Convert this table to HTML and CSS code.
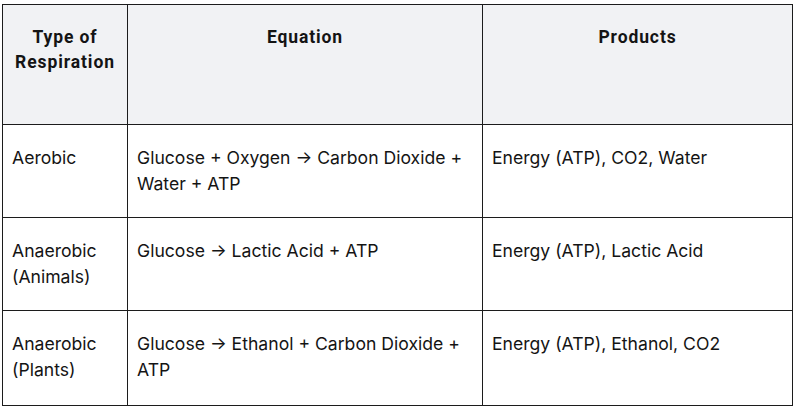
FILE: index.html
```html
<!DOCTYPE html>
<html lang="en">
<head>
<meta charset="utf-8">
<title>Types of Respiration</title>
<link rel="stylesheet" href="styles.css">
</head>
<body>
<table class="resp-table">
  <colgroup>
    <col class="col-type">
    <col class="col-eq">
    <col class="col-prod">
  </colgroup>
  <thead>
    <tr class="head-row">
      <th>Type of Respiration</th>
      <th>Equation</th>
      <th>Products</th>
    </tr>
  </thead>
  <tbody>
    <tr class="row-a">
      <td>Aerobic</td>
      <td>Glucose + Oxygen → Carbon Dioxide + Water + ATP</td>
      <td>Energy (ATP), CO2, Water</td>
    </tr>
    <tr class="row-b">
      <td>Anaerobic (Animals)</td>
      <td>Glucose → Lactic Acid + ATP</td>
      <td>Energy (ATP), Lactic Acid</td>
    </tr>
    <tr class="row-c">
      <td>Anaerobic (Plants)</td>
      <td>Glucose → Ethanol + Carbon Dioxide + ATP</td>
      <td>Energy (ATP), Ethanol, CO2</td>
    </tr>
  </tbody>
</table>
</body>
</html>
```
FILE: styles.css
```css
html, body {
  margin: 0;
  padding: 0;
  background: #ffffff;
}
body {
  padding: 4px 0 0 2px;
}
.resp-table {
  border-collapse: collapse;
  table-layout: fixed;
  width: 791px;
  color: #141414;
}
.col-type { width: 125px; }
.col-eq { width: 355px; }
.col-prod { width: 310px; }

.resp-table th,
.resp-table td {
  border: 1px solid #1c1c1c;
  vertical-align: top;
  text-align: left;
}
.resp-table th {
  background: #f1f2f4;
  font-family: Roboto, "Liberation Sans", sans-serif;
  font-weight: 700;
  font-size: 17.5px;
  letter-spacing: 0.9px;
  line-height: 25px;
  text-align: center;
  padding: 20px 6px 0;
}
.resp-table td {
  font-family: Inter, "Liberation Sans", sans-serif;
  font-weight: 400;
  font-size: 17.6px;
  line-height: 26px;
  padding: 20px 9px 0;
}
.head-row { height: 120px; }
.row-a { height: 93px; }
.row-b { height: 93px; }
.row-c { height: 95px; }
```
